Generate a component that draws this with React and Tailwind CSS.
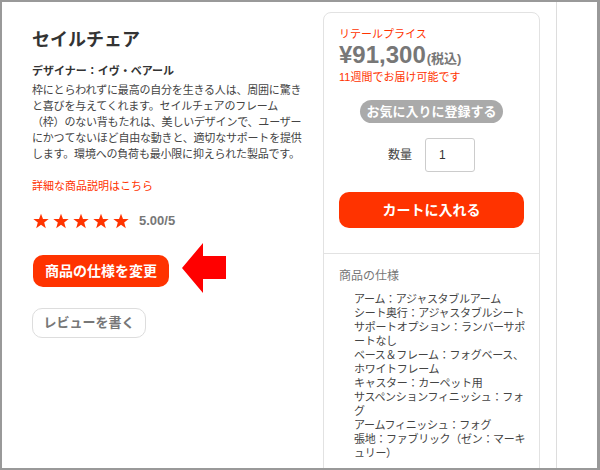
import React from "react";

const RED = "text-[#ff3300]";

const specs = [
  ["アーム：アジャスタブルアーム"],
  ["シート奥行：アジャスタブルシート"],
  ["サポートオプション：ランバーサポ", "ートなし"],
  ["ベース＆フレーム：フォグベース、", "ホワイトフレーム"],
  ["キャスター：カーペット用"],
  ["サスペンションフィニッシュ：フォ", "グ"],
  ["アームフィニッシュ：フォグ"],
  ["張地：ファブリック（ゼン：マーキ", "ュリー）"],
];

const Star = () => (
  <svg width="16" height="16" viewBox="0 0 24 24">
    <polygon
      points="12,1 15,9 23.5,9 16.8,14.3 19.2,22.8 12,17.8 4.8,22.8 7.2,14.3 0.5,9 9,9"
      fill="#ff3300"
    />
  </svg>
);

const Arrow = () => (
  <svg width="45" height="50" viewBox="0 0 45 50">
    <polygon points="0,25 21,0 21,13 44,13 44,36 21,36 21,50" fill="#ff0000" />
  </svg>
);

export default function App() {
  return (
    <div className="w-[600px] h-[470px] overflow-hidden bg-[#999] pt-[2px] pl-[2px] pr-[3px] pb-[2px] font-['Liberation_Sans','Noto_Sans_CJK_JP',sans-serif]">
      <div className="flex h-full bg-white overflow-hidden">
        {/* left column */}
        <div className="w-[321px] shrink-0 pl-[30px]">
          <h1 className="mt-[26px] text-[18px] leading-[24px] font-bold text-[#333]">セイルチェア</h1>
          <p className="mt-[11px] text-[11px] leading-[16px] font-bold text-[#333]">デザイナー：イヴ・ベアール</p>
          <p className="mt-[3px] text-[11px] leading-[16px] text-[#444] whitespace-nowrap tracking-[-0.2px]">
            枠にとらわれずに最高の自分を生きる人は、周囲に驚き
            <br />
            と喜びを与えてくれます。セイルチェアのフレーム
            <br />
            （枠）のない背もたれは、美しいデザインで、ユーザー
            <br />
            にかつてないほど自由な動きと、適切なサポートを提供
            <br />
            します。環境への負荷も最小限に抑えられた製品です。
          </p>
          <a className={`block mt-[16px] text-[11px] leading-[16px] ${RED}`}>詳細な商品説明はこちら</a>

          <div className="mt-[17px] h-[20px] flex items-center">
            <div className="flex gap-[4px] pl-[1px]">
              <Star />
              <Star />
              <Star />
              <Star />
              <Star />
            </div>
            <span className="ml-[10px] text-[13px] font-bold text-[#777]">5.00/5</span>
          </div>

          <div className="mt-[12px] flex items-center">
            <button className="mt-[6px] ml-[1px] h-[32px] w-[136px] rounded-[10px] bg-[#ff3300] text-white text-[14px] font-bold">
              商品の仕様を変更
            </button>
            <div className="ml-[13px]">
              <Arrow />
            </div>
          </div>

          <button className="mt-[15px] h-[30px] w-[114px] rounded-[10px] border border-[#ddd] bg-white text-[13px] font-bold text-[#777]">
            レビューを書く
          </button>
        </div>

        {/* price card */}
        <div className="w-[217px] shrink-0 mt-[10px] h-[480px] rounded-[8px] border border-[#e2e2e2]">
          <div className="px-[15px] pt-[13px] pb-[25px] border-b border-[#e2e2e2]">
            <p className={`text-[11px] leading-[16px] ${RED}`}>リテールプライス</p>
            <p className="flex items-baseline h-[26px] overflow-visible leading-[26px] text-[#777] font-bold">
              <span className="text-[24px] leading-[26px]">¥91,300</span>
              <span className="text-[13px] leading-[26px] ml-[1px]">(税込)</span>
            </p>
            <p className={`mt-[2px] text-[11px] leading-[14px] ${RED}`}>11週間でお届け可能です</p>
            <div className="mt-[16px] flex justify-center">
              <button className="h-[23px] px-[6px] rounded-full bg-[#aaa] text-white text-[13px] font-bold">
                お気に入りに登録する
              </button>
            </div>
            <div className="mt-[15px] flex justify-center items-center gap-[13px]">
              <span className="text-[12px] text-[#444]">数量</span>
              <div className="w-[50px] h-[34px] border border-[#ccc] rounded-[3px] flex items-center pl-[13px] text-[12px] text-[#333]">
                1
              </div>
            </div>
            <button className="mt-[20px] w-full h-[36px] rounded-[10px] bg-[#ff3300] text-white text-[14px] font-bold">
              カートに入れる
            </button>
          </div>
          <div className="px-[15px] pt-[14px]">
            <p className="text-[12px] leading-[16px] text-[#777]">商品の仕様</p>
            <div className="mt-[8px] pl-[15px] text-[11px] leading-[14px] text-[#444] whitespace-nowrap tracking-[-0.3px]">
              {specs.map((lines, i) => (
                <div key={i}>
                  {lines.map((l, j) => (
                    <div key={j}>{l}</div>
                  ))}
                </div>
              ))}
            </div>
          </div>
        </div>

        <div className="w-[16px] shrink-0" />
        <div className="w-px shrink-0 bg-[#ddd]" />
        <div className="flex-1" />
      </div>
    </div>
  );
}
